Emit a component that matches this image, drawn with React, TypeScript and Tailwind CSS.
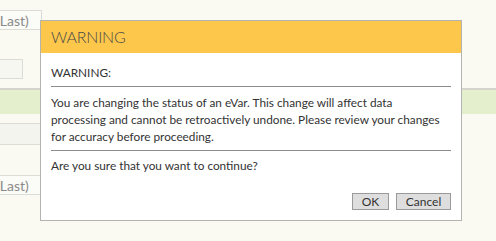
import React from 'react';

const font = { fontFamily: 'Lato, "Open Sans", sans-serif' };

export default function App() {
  return (
    <div className="relative h-[241px] w-[496px] overflow-hidden bg-[#fafaf2] text-[#333]" style={font}>
      {/* background form, mostly hidden under the dialog */}
      <div className="flex flex-col">
        <div className="ml-[-7px] mt-[10px] flex h-[20px] w-[49px] items-center border border-[#dcdcd6] bg-[#fbfbf7] pl-[2px] text-[14px] text-[#8a8a8a]">(Last)</div>
        <div className="mt-[29px] h-[20px] w-[23px] border border-l-0 border-[#dcdcd6] bg-[#f7f7f2]" />
        <div className="mt-[9px] h-[26px] w-full border-t-2 border-[#d4d4cc] bg-[#e3efcd]" />
        <div className="mt-[9px] h-[22px] w-[40px] border-y border-[#dcdcd6] bg-[#f4f4ee]" />
        <div className="ml-[-7px] mt-[30px] flex h-[20px] w-[49px] items-center border border-[#dcdcd6] bg-[#fbfbf7] pl-[2px] text-[14px] text-[#8a8a8a]">(Last)</div>
      </div>

      {/* modal */}
      <div className="absolute left-[40px] top-[20px] flex h-[201px] w-[422px] flex-col border border-[#b3b3b0] bg-white">
        <div className="flex h-[32px] items-center bg-[#fdc74b] px-[10px] text-[16px] font-light tracking-[-0.2px] text-[#4a4a4a]">WARNING</div>
        <div className="flex flex-1 flex-col px-[10px] text-[11.8px] leading-[17px]">
          <div className="mt-[11px]">WARNING:</div>
          <div className="mt-[5px] border-t border-[#8c8c8c]" />
          <p className="mt-[7px] whitespace-nowrap">
            You are changing the status of an eVar. This change will affect data<br />
            processing and cannot be retroactively undone. Please review your changes<br />
            for accuracy before proceeding.
          </p>
          <div className="mt-[5px] border-t border-[#8c8c8c]" />
          <div className="mt-[6px]">Are you sure that you want to continue?</div>
          <div className="mt-auto mb-[10px] flex justify-end gap-[7px]">
            <button className="h-[17px] w-[37px] border border-[#9a9a9a] bg-[#dedede] text-[12px] leading-[15px] text-[#333]">OK</button>
            <button className="h-[17px] w-[55px] border border-[#9a9a9a] bg-[#dedede] text-[12px] leading-[15px] text-[#333]">Cancel</button>
          </div>
        </div>
      </div>
    </div>
  );
}
